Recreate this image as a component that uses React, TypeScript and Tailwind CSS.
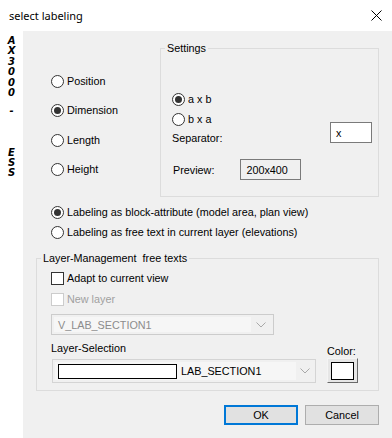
import React from "react";

function Radio({ checked, label, className = "" }: { checked?: boolean; label: string; className?: string }) {
  return (
    <div className={`flex items-center h-[20px] ${className}`}>
      <span className="w-[13px] h-[13px] rounded-full border border-[#333333] bg-white flex items-center justify-center shrink-0">
        {checked && <span className="w-[7px] h-[7px] rounded-full bg-[#333333]" />}
      </span>
      <span className="ml-[3px] whitespace-nowrap">{label}</span>
    </div>
  );
}

function Check({ label, disabled, className = "" }: { label: string; disabled?: boolean; className?: string }) {
  return (
    <div className={`flex items-center h-[20px] ${className}`}>
      <span
        className={`w-[13px] h-[13px] border bg-white shrink-0 ${disabled ? "border-[#cccccc]" : "border-[#333333]"}`}
      />
      <span className={`ml-[3px] whitespace-nowrap ${disabled ? "text-[#a0a0a0]" : ""}`}>{label}</span>
    </div>
  );
}

function Chevron() {
  return (
    <svg width="10" height="6" viewBox="0 0 10 6" className="shrink-0">
      <polyline points="0.5,0.5 5,5 9.5,0.5" fill="none" stroke="#a8a8a8" strokeWidth="1" />
    </svg>
  );
}

function Group({ title, className = "", children }: { title: string; className?: string; children: React.ReactNode }) {
  return (
    <div className={`relative border border-[#dcdcdc] ${className}`}>
      <span className="absolute -top-[9px] left-[4px] px-[2px] bg-[#f0f0f0] leading-[16px] whitespace-pre">{title}</span>
      {children}
    </div>
  );
}

export default function App() {
  const strip = ["A", "X", "3", "0", "0", "0"];
  return (
    <div className="w-[392px] h-[438px] flex flex-col bg-white text-black font-['Liberation_Sans',Arial,sans-serif] text-[10.8px] leading-[16px] overflow-hidden">
      {/* Title bar */}
      <div className="h-[31px] flex items-center justify-between pl-[9px] pr-[10px] shrink-0">
        <span className="font-['Noto_Sans',sans-serif] text-[11px]">select labeling</span>
        <svg width="11" height="11" viewBox="0 0 11 11">
          <path d="M0.5 0.5 L10.5 10.5 M10.5 0.5 L0.5 10.5" stroke="#000" strokeWidth="1" />
        </svg>
      </div>
      <div className="flex flex-1">
        {/* left strip */}
        <div className="w-[23px] shrink-0 flex flex-col items-center pt-[4.5px] font-['DejaVu_Sans',sans-serif] font-bold italic text-[10px] leading-[10.6px]">
          {strip.map((c, i) => (
            <div key={i} className="h-[10.6px]">{c}</div>
          ))}
          <div className="h-[10.6px] mt-[7px]">-</div>
          <div className="h-[10px] mt-[31px]">E</div>
          <div className="h-[10px]">S</div>
          <div className="h-[10px]">S</div>
        </div>
        {/* main panel */}
        <div className="flex-1 bg-[#f0f0f0] px-[13px] pt-[17px] flex flex-col">
          <div className="flex">
            <div className="flex flex-col pl-[15px]">
              <Radio label="Position" className="mt-[23px]" />
              <Radio label="Dimension" checked className="mt-[9px]" />
              <Radio label="Length" className="mt-[10px]" />
              <Radio label="Height" className="mt-[9px]" />
            </div>
            <Group title="Settings" className="ml-auto w-[219px] h-[149px]">
              <div className="flex flex-col pl-[11px] pr-[6px]">
                <Radio label="a x b" checked className="mt-[40px]" />
                <Radio label="b x a" />
                <div className="flex items-start mt-[1px] h-[16px]">
                  <span className="ml-[0px]">Separator:</span>
                  <div className="ml-auto -mt-[8px] w-[42px] h-[21px] border border-[#7a7a7a] bg-white flex items-center pl-[5px]">
                    x
                  </div>
                </div>
                <div className="flex items-center mt-[13px] h-[21px]">
                  <span className="ml-[1px]">Preview:</span>
                  <div className="ml-[26px] w-[61px] h-[21px] border border-[#7a7a7a] bg-[#f0f0f0] flex items-center pl-[5px]">
                    200x400
                  </div>
                </div>
              </div>
            </Group>
          </div>

          <div className="flex flex-col pl-[15px] mt-[5px]">
            <Radio label="Labeling as block-attribute (model area, plan view)" checked />
            <Radio label="Labeling as free text in current layer (elevations)" />
          </div>

          <Group title="Layer-Management  free texts" className="mt-[16px] h-[133px]">
            <div className="flex flex-col pl-[14px] pr-[20px]">
              <Check label="Adapt to current view" className="mt-[9px]" />
              <Check label="New layer" disabled className="mt-[1px]" />
              <div className="mt-[5px] w-[223px] h-[21px] border border-[#cccccc] bg-[#f0f0f0] flex items-center p-[2px]">
                <div className="flex-1 h-full bg-[#f6f6f6] flex items-center pl-[4px] text-[#8c8c8c]">V_LAB_SECTION1</div>
                <div className="w-[20px] flex justify-center">
                  <Chevron />
                </div>
              </div>
              <div className="flex items-end">
                <div className="flex flex-col">
                  <span className="mt-[5px] h-[16px]">Layer-Selection</span>
                  <div className="mt-[3px] ml-[1px] w-[264px] h-[24px] border border-[#d4d4d4] bg-[#f0f0f0] flex items-center p-[2px]">
                    <div className="flex-1 h-full bg-[#f6f6f6] flex items-center pl-[3px]">
                      <span className="w-[119px] h-[15px] border border-black bg-white shrink-0" />
                      <span className="ml-[4px]">LAB_SECTION1</span>
                    </div>
                    <div className="w-[17px] flex justify-center">
                      <Chevron />
                    </div>
                  </div>
                </div>
                <div className="ml-auto flex flex-col items-start">
                  <span className="h-[16px]">Color:</span>
                  <div className="mt-[-1px] w-[31px] h-[25px] border border-t-[#f4f4f4] border-l-[#f4f4f4] border-r-[#696969] border-b-[#696969] bg-[#e6e6e6] flex items-center justify-center">
                    <span className="w-[23px] h-[18px] border border-black bg-white" />
                  </div>
                </div>
              </div>
            </div>
          </Group>

          <div className="flex justify-end mt-[14px] gap-[7px]">
            <button className="w-[74px] h-[20px] border-2 border-[#0078d7] bg-[#e1e1e1] flex items-center justify-center">
              OK
            </button>
            <button className="w-[74px] h-[20px] border border-[#adadad] bg-[#e1e1e1] flex items-center justify-center">
              Cancel
            </button>
          </div>
        </div>
      </div>
    </div>
  );
}
